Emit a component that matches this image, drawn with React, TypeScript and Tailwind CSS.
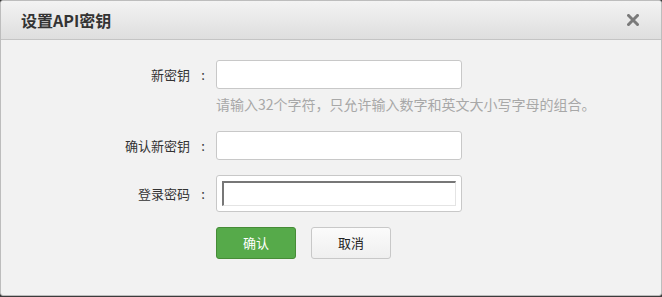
import React from 'react'

const font = { fontFamily: '"Noto Sans CJK SC", "Microsoft YaHei", sans-serif' }

const Label = ({ text }: { text: string }) => (
  <label className="w-[207px] shrink-0 flex justify-end text-[13px] text-[#333]">
    <span>{text}</span>
    <span className="w-[10px] ml-[8px] text-center">:</span>
  </label>
)

const App = () => {
  return (
    <div className="w-[662px] h-[297px] bg-[#3c3c3c]" style={font}>
      <div className="h-[296px] bg-[#f2f2f2] border border-[#bdbdbd] rounded-[3px] overflow-hidden flex flex-col">
        <div className="h-[39px] shrink-0 flex items-center justify-between pl-[20px] pr-[22px] bg-gradient-to-b from-[#f3f3f3] to-[#dedede] border-b border-[#c4c4c4]">
          <h2 className="text-[16px] font-bold text-[#333] leading-none">设置API密钥</h2>
          <svg width="12" height="12" viewBox="0 0 12 12">
            <path d="M1.5 1.5 L10.5 10.5 M10.5 1.5 L1.5 10.5" stroke="#7a7a7a" strokeWidth="3" strokeLinecap="square" />
          </svg>
        </div>

        <div className="flex flex-col pt-[20px]">
          <div className="flex items-center gap-[8px]">
            <Label text="新密钥" />
            <input type="text" className="w-[246px] h-[29px] bg-white border border-[#c8c8c8] rounded-[3px] outline-none" />
          </div>
          <p className="ml-[215px] mt-[6px] text-[14px] text-[#a8a8a8] leading-[18px] whitespace-nowrap">请输入32个字符，只允许输入数字和英文大小写字母的组合。</p>

          <div className="flex items-center gap-[8px] mt-[18px]">
            <Label text="确认新密钥" />
            <input type="text" className="w-[246px] h-[29px] bg-white border border-[#c8c8c8] rounded-[3px] outline-none" />
          </div>

          <div className="flex items-center gap-[8px] mt-[15px]">
            <Label text="登录密码" />
            <div className="w-[246px] h-[37px] bg-white border border-[#c8c8c8] rounded-[3px] flex items-center justify-center">
              <input type="password" className="w-[234px] h-[25px] bg-white border-t-2 border-l-2 border-b border-r border-t-[#777] border-l-[#777] border-b-[#e4e4e4] border-r-[#e4e4e4] outline-none" />
            </div>
          </div>

          <div className="flex gap-[15px] ml-[215px] mt-[15px]">
            <button className="w-[80px] h-[32px] rounded-[3px] bg-[#56aa4a] border border-[#468c37] text-white text-[13px]">确认</button>
            <button className="w-[80px] h-[32px] rounded-[3px] bg-gradient-to-b from-[#fbfbfb] to-[#efefef] border border-[#c8c8c8] text-[#222] text-[13px]">取消</button>
          </div>
        </div>
      </div>
    </div>
  )
}

export default App
